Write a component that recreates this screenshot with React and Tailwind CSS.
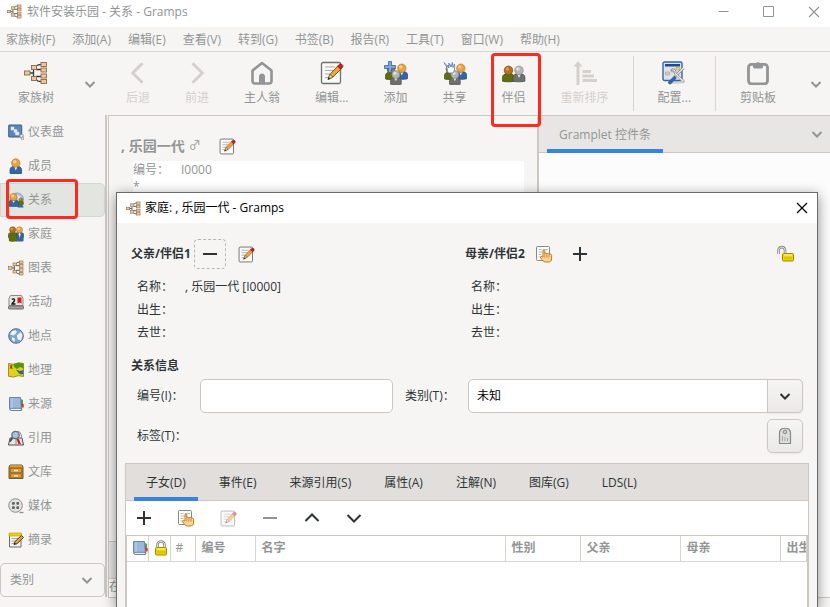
import React, { useState } from "react";

const Chevron = ({ dir = "down", size = 16, width = 2 }) => {
  const paths = {
    down: "M3.5 6l4.5 4.5L12.500 6",
    up: "M1.500 11L8 4.500l6.500 6.500",
    wide: "M1.500 5L8 11.500 14.500 5",
    left: "M11 1.500L4.500 8l6.500 6.500",
    right: "M5 1.500L11.500 8 5 14.500",
  };
  return (
    <svg width={size} height={size} viewBox="0 0 16 16" fill="none" stroke="currentColor" strokeWidth={width}>
      <path d={paths[dir]} />
    </svg>
  );
};

const PlusIcon = () => (
  <svg width="16" height="16" viewBox="0 0 16 16" fill="currentColor">
    <path d="M7 1h2v6h6v2H9v6H7V9H1V7h6z" />
  </svg>
);

const MinusIcon = () => (
  <svg width="16" height="16" viewBox="0 0 16 16" fill="currentColor">
    <path d="M1 7h14v2H1z" />
  </svg>
);

const CloseIcon = () => (
  <svg width="12" height="12" viewBox="0 0 12 12" stroke="currentColor" strokeWidth="1.200">
    <path d="M1 1l10 10M11 1L1 11" />
  </svg>
);

const TreeIcon = ({ size = 16 }) => (
  <svg width={size} height={size} viewBox="0 0 24 24">
    <g fill="none" stroke="#3a3a3a" strokeWidth="1.300">
      <path d="M5 12h4M9.500 9v6M11 7.500C13 3.500 14 3.500 18 3.500M12 8.500h6M12 15.500h6M11 16.500c2 4 3 4 7 4" />
    </g>
    <g fill="#ecc79c" stroke="#8c6b47" strokeWidth=".9">
      <rect x="0.500" y="10" width="5.500" height="4" />
      <rect x="7.500" y="4.500" width="5" height="4" />
      <rect x="7.500" y="15.500" width="5" height="4" />
      <rect x="17" y="1.500" width="5.500" height="4" />
      <rect x="17" y="7" width="5.500" height="4" />
      <rect x="17" y="13" width="5.500" height="4" />
      <rect x="17" y="18.500" width="5.500" height="4" />
    </g>
  </svg>
);

const tones = {
  blue: ["#e9a244", "#f9cf8c", "#3465a4", "#b3741d", "#204a87"],
  green: ["#b0701f", "#d99c4e", "#5b6f0c", "#7d4c10", "#3f4d06"],
  gray: ["#b4b6b2", "#e2e3e1", "#6e706c", "#888a85", "#4d4f4c"],
};

// Head and shoulders, drawn in a 12 by 15 box
const Bust = ({ x, y, s = 1, tone }) => {
  const [head, shine, body, headLine, bodyLine] = tones[tone];
  return (
    <g transform={`translate(${x} ${y}) scale(${s})`}>
      <path d="M.5 14.500V11C.5 8.500 2.500 7.500 6 7.500s5.500 1 5.500 3.500v3.500C9 15.300 3 15.300.5 14.500z" fill={body} stroke={bodyLine} strokeWidth=".7" />
      {tone !== "green" && <path d="M4.600 8.300L6 11.500l1.400-3.200z" fill="#eeeeec" />}
      <circle cx="6" cy="4.500" r="4" fill={head} stroke={headLine} strokeWidth=".6" />
      <circle cx="5" cy="3.300" r="1.600" fill={shine} />
    </g>
  );
};

const EditIcon = ({ size = 16 }) => (
  <svg width={size} height={size} viewBox="0 0 24 24">
    <rect x="1.500" y="1.500" width="19" height="21" rx="1.500" fill="#fafafa" stroke="#6f716d" strokeWidth="1.300" />
    <path d="M5 6h10M5 9.500h8M5 13h5M5 16.500h3" stroke="#a9aba7" strokeWidth="1.200" />
    <path d="M8 18.500l1.800-5L18 4.800l3.200 3L13 16z" fill="#f3a33b" stroke="#7c4a0b" strokeWidth=".9" />
    <path d="M8 18.500l1.800-5 3.200 2.500z" fill="#f2dcb8" stroke="#55452c" strokeWidth=".7" />
    <path d="M8 18.500l.8-2.200 1.400 1.200z" fill="#111" />
    <path d="M17.500 5.300l2-2c1.500-1.200 4.300 1 3.200 2.800l-2 2.200z" fill="#d51c1c" stroke="#8b0d0d" strokeWidth=".7" />
  </svg>
);

const HandIcon = () => (
  <svg width="18" height="18" viewBox="0 0 18 18">
    <rect x="1.500" y="1.500" width="13" height="14" rx="1" fill="#fbfbfb" stroke="#888a85" />
    <path d="M3.500 4.500h3M3.500 7h4M3.500 9.500h3M3.500 12h3M8 4.500h5" stroke="#babdb6" />
    <path d="M8 12V5.800c0-1.300 1.800-1.300 1.800 0V9l1-.8 1.200.8 1.300-.6 1 .9 1.300-.3 1 1.200V14c0 2-1.500 3-3.500 3h-2.600C8.500 17 7 15 5.700 12.800c-.6-1.200.8-1.800 1.500-1z" fill="#fbd29a" stroke="#c17d11" strokeWidth="1" />
    <path d="M9.800 9.500v3M11.900 9.500v3M14 9.800v2.700" stroke="#c17d11" strokeWidth=".8" />
  </svg>
);

const LockIcon = ({ open }) => {
  const shackle = open ? "M2.500 9V5.500C2.500 1 9 1 9 5.500V8" : "M5.500 9V5.500C5.500 1.500 12.500 1.500 12.500 5.500V9";
  return (
    <svg width="18" height="18" viewBox="0 0 18 18">
      <path d={shackle} fill="none" stroke="#888a85" strokeWidth="2.600" />
      <path d={shackle} fill="none" stroke="#e8e9e6" strokeWidth="1" />
      <rect x={open ? 6.5 : 3.5} y="8.500" width="11" height="7.500" rx="1" fill="#edd400" stroke="#a58a00" />
      <path d={open ? "M8 10h8" : "M5 10h8"} stroke="#fbf08a" strokeWidth="1.300" />
      <path d={open ? "M8 13h8" : "M5 13h8"} stroke="#d0b400" />
    </svg>
  );
};

const BookIcon = () => (
  <svg width="16" height="16" viewBox="0 0 16 16">
    <path d="M13 3l2 1v3L13 8z" fill="#3faa36" />
    <path d="M13 6.500l2.700 1.500v3.500L13 12z" fill="#e0272c" />
    <path d="M13 10.500l1.500.5v2.500l-1.500.5z" fill="#edd400" />
    <path d="M1.500 1.500h11l1 12.500H3c-1 0-1.500-.6-1.500-1.500z" fill="#9ab8db" stroke="#5c7aa5" strokeWidth=".9" />
    <path d="M2.500 12.300h10.800l.2 2.200H3.300c-1.300 0-1.300-2.200-.8-2.200z" fill="#eeeeec" stroke="#5b6f8c" strokeWidth=".8" />
    <path d="M4 2v10" stroke="#bdd2ea" />
  </svg>
);

const HomeIcon = () => (
  <svg width="24" height="24" viewBox="0 0 24 24">
    <path d="M2.500 9.500L12 2l9.500 7.500V20c0 1.500-1 2.500-2.500 2.500H5c-1.500 0-2.500-1-2.500-2.500z" fill="none" stroke="#929595" strokeWidth="2.600" strokeLinejoin="round" />
    <path d="M9 22v-6.500c0-4 6-4 6 0V22z" fill="#929595" />
  </svg>
);

const AddPeopleIcon = () => (
  <svg width="24" height="24" viewBox="0 0 24 24">
    <Bust x={1} y={3.500} s={1} tone="green" />
    <Bust x={11.500} y={2.500} s={1.050} tone="blue" />
    <Bust x={6} y={9} s={0.980} tone="gray" />
    <path d="M4.500.5h3v4h4v3h-4v4h-3v-4h-4v-3h4z" fill="#7aa7dc" stroke="#3465a4" strokeWidth=".8" />
  </svg>
);

const ShareIcon = () => (
  <svg width="24" height="24" viewBox="0 0 24 24">
    <Bust x={1} y={3.500} s={1} tone="green" />
    <Bust x={11.500} y={2.500} s={1.050} tone="blue" />
    <Bust x={6} y={9} s={0.980} tone="gray" />
    <path d="M1 1.500l3 5c0 2 .5 4 1.500 5.500h4.500c1.500-2 2-5.500 1.500-9L10 6.500 9.300 1.500 8 6 5.800 2l.2 5z" fill="#fff" stroke="#5b86c4" strokeWidth=".9" />
  </svg>
);

const PartnersIcon = () => (
  <svg width="24" height="24" viewBox="0 0 24 24">
    <Bust x={0} y={4.500} s={1.080} tone="green" />
    <Bust x={10.500} y={4.500} s={1.080} tone="gray" />
  </svg>
);

const SortIcon = () => (
  <svg width="24" height="24" viewBox="0 0 24 24" fill="#d5d0cc">
    <path d="M5 0l4.500 5.500h-3V24h-3V5.500h-3z" />
    <path d="M9.500 9H18v3H9.500zM9.500 13.500H21v3H9.500zM9.500 18H24v3H9.500z" />
  </svg>
);

const ConfigIcon = () => (
  <svg width="24" height="24" viewBox="0 0 24 24">
    <ellipse cx="14" cy="21.500" rx="9" ry="1.500" fill="#d3d7cf" />
    <rect x="1" y="1" width="19" height="18.500" rx="1.500" fill="#d9e3ef" stroke="#3465a4" strokeWidth="1.400" />
    <rect x="3" y="3" width="15" height="2.500" fill="#204a87" />
    <path d="M3.500 11h4v3h-4zM9 8h4v3H9zM14 6.500h3.500V9H14z" fill="#ecc79c" stroke="#b59a78" strokeWidth=".6" />
    <path d="M12.500 16l9-9" stroke="#888a85" strokeWidth="2.600" />
    <path d="M12.500 16l9-9" stroke="#e3e5e1" strokeWidth="1.500" />
    <path d="M8 21.500l4.500-4.500" stroke="#3465a4" strokeWidth="3.600" strokeLinecap="round" />
    <path d="M9 9.500l3 .5.500 3 8.500 8.500 1.500-1.500-8.500-8c.5-3-2-4.500-4-4z" fill="#eeeeec" stroke="#888a85" strokeWidth=".8" />
  </svg>
);

const ClipboardIcon = () => (
  <svg width="24" height="24" viewBox="0 0 24 24">
    <rect x="2.500" y="3.300" width="19" height="19.500" rx="3" fill="none" stroke="#929595" strokeWidth="2.800" />
    <path d="M7 3h2.500C10 .5 14 .5 14.500 3H17v3.500l-1.500 1h-7L7 6.500z" fill="#929595" />
  </svg>
);

const DashboardIcon = () => (
  <svg width="16" height="16" viewBox="0 0 16 16">
    <rect x=".7" y="1" width="13" height="12" rx=".5" fill="#5f86ba" stroke="#3b5f93" />
    <path d="M3 3h3v3H3zM6 5.500h3v3H6zM7.500 8h3.500v3H7.500z" fill="#e9eff7" stroke="#c8d6e8" strokeWidth=".5" />
    <circle cx="13.500" cy="12" r="1.800" fill="#dfe3e8" stroke="#888a85" strokeWidth=".8" />
    <circle cx="14.500" cy="14.500" r="1.300" fill="#dfe3e8" stroke="#888a85" strokeWidth=".7" />
  </svg>
);

const PersonIcon = () => (
  <svg width="16" height="16" viewBox="0 0 16 16">
    <Bust x={1.500} y={0.300} s={1.050} tone="blue" />
  </svg>
);

const RelationIcon = () => (
  <svg width="16" height="16" viewBox="0 0 16 16">
    <circle cx="9" cy="7.500" r="6.500" fill="#a9c4e4" stroke="#6d95c8" strokeWidth=".8" />
    <path d="M8 2l5 3-3 3z" fill="#dce8f5" />
    <Bust x={0.200} y={1} s={0.900} tone="blue" />
    <path d="M9.500 15.500c0-4 6-4 6 0z" fill="#3465a4" />
    <Bust x={10} y={5.500} s={0.480} tone="green" />
  </svg>
);

const FamilyIcon = () => (
  <svg width="16" height="16" viewBox="0 0 16 16">
    <Bust x={6.800} y={0.300} s={0.780} tone="blue" />
    <path d="M7.500 15.500l1-6h6.500l.7 4.500c0 1-1 1.500-2 1.500z" fill="#3465a4" />
    <path d="M10.500 8l1.200 4 1-4z" fill="#eeeeec" />
    <Bust x={0} y={0.300} s={0.780} tone="green" />
    <path d="M.5 9.500h8v5.500c-2 1-6.500.8-7.500 0z" fill="#5b6f0c" />
  </svg>
);

const EventIcon = () => (
  <svg width="16" height="16" viewBox="0 0 16 16">
    <path d="M2.500 1.500h11l1.500 3v7H1v-7z" fill="#e6e7e4" stroke="#888a85" />
    <rect x="0.500" y="12" width="15" height="3" rx="1" fill="#a4a6a1" stroke="#6a6c68" />
    <path d="M4 5.500c1-1.300 3-.6 2.500 1C6.200 7.800 4.500 8.500 4 10h3.500" fill="none" stroke="#111" strokeWidth="1.300" />
    <path d="M9.500 3.500h4v6l-2-1-2 1z" fill="#d51c1c" />
  </svg>
);

const PlaceIcon = () => (
  <svg width="16" height="16" viewBox="0 0 16 16">
    <circle cx="8" cy="8" r="7.300" fill="#7fa3cf" stroke="#4c71a3" />
    <path d="M4 3l3.500-.8L9 4 7 6.500 5 7.500 2 6zM9 7l4-3 1.500 3.500-1.500 5-3-.8-1-2.500zM4 9l3 1.500L6.500 14 4 12z" fill="#eef3f9" />
  </svg>
);

const GeoIcon = () => (
  <svg width="16" height="16" viewBox="0 0 16 16">
    <path d="M.5 1.500l5 .8 5-1.500 5 .7v13l-5-.8-5 1.300-5-.7z" fill="#e6cf1a" stroke="#8c7b0d" strokeWidth=".8" />
    <path d="M5.500 2l5-1.200 4.700.7v5L12 5 9 7 6 5z" fill="#4e9a06" />
    <path d="M8 7.500l4 1.500 3.200-1v4l-3 .5-2-2z" fill="#3465a4" />
    <path d="M2 3.500l2.500 3M4.500 3.500l-2.500 3M3.200 2.800v4" stroke="#7c3a10" strokeWidth=".9" />
  </svg>
);

const CitationIcon = () => (
  <svg width="16" height="16" viewBox="0 0 16 16">
    <path d="M2 8h12l1.500 7H.5z" fill="#e8e9e6" stroke="#4d4f4c" />
    <path d="M8 8v7" stroke="#888a85" />
    <path d="M8.500 9h2.500l2 5.500-1.500-.8-1 .8z" fill="#d51c1c" />
    <path d="M5 7L2 11.500" stroke="#4d4f4c" strokeWidth="2" />
    <circle cx="7.500" cy="5" r="3.700" fill="#a8c3e2" stroke="#64707e" strokeWidth="1.300" />
    <path d="M10 1c3 1 3.500 5 4 8" fill="none" stroke="#888a85" />
  </svg>
);

const RepositoryIcon = () => (
  <svg width="16" height="16" viewBox="0 0 16 16">
    <path d="M2 1h12l1 2v11.500H1V3z" fill="#c17d11" stroke="#6e5a3a" />
    <path d="M2 2h12" stroke="#edbd6c" />
    <rect x="2.500" y="4.500" width="11" height="4" fill="#dc9d3c" stroke="#9a661c" strokeWidth=".7" />
    <rect x="2.500" y="9.800" width="11" height="4" fill="#dc9d3c" stroke="#9a661c" strokeWidth=".7" />
    <path d="M6 6.500h4M6 11.800h4" stroke="#f5ead4" strokeWidth="1.400" />
  </svg>
);

const MediaIcon = () => (
  <svg width="16" height="16" viewBox="0 0 16 16">
    <circle cx="7.500" cy="7.500" r="6.800" fill="#e0e3dd" stroke="#8d908b" />
    <path d="M11.500 14.500h4" stroke="#8d908b" strokeWidth="1.300" />
    <g fill="#5d625e">
      <rect x="4" y="4" width="2.800" height="2.800" rx="1" />
      <rect x="8.300" y="4" width="2.800" height="2.800" rx="1" />
      <rect x="4" y="8.300" width="2.800" height="2.800" rx="1" />
      <rect x="8.300" y="8.300" width="2.800" height="2.800" rx="1" />
    </g>
  </svg>
);

const NoteIcon = () => (
  <svg width="16" height="16" viewBox="0 0 16 16">
    <path d="M1.500 2h11.500v13H1.500z" fill="#f4f4f2" stroke="#6a6c68" />
    <path d="M1 1h12.500v3H1z" fill="#edd400" stroke="#b59c00" strokeWidth=".6" />
    <path d="M3.500 6.500h7M3.500 9h4M3.500 11.500h3" stroke="#a9aba7" />
    <path d="M6 12.500l1-3 6.500-6 2 2L9 11.800z" fill="#e9a13b" stroke="#3a2a10" strokeWidth=".9" />
    <path d="M6 12.500l.5-1.700 1.300 1z" fill="#111" />
  </svg>
);

const TagIcon = () => (
  <svg width="16" height="18" viewBox="0 0 16 18">
    <path d="M2.500 16.500v-11c0-2 2-4 3.500-4h4c1.500 0 3.500 2 3.500 4v11z" fill="#dcded9" stroke="#888a85" strokeWidth="1.200" />
    <circle cx="8" cy="5" r="1.800" fill="#c9cbc7" stroke="#888a85" />
    <path d="M5.500 9v5M8 10v4M10.500 11v3" stroke="#a4a6a1" />
  </svg>
);

const menus = ["家族树(F)", "添加(A)", "编辑(E)", "查看(V)", "转到(G)", "书签(B)", "报告(R)", "工具(T)", "窗口(W)", "帮助(H)"];

const views = [
  ["仪表盘", DashboardIcon],
  ["成员", PersonIcon],
  ["关系", RelationIcon],
  ["家庭", FamilyIcon],
  ["图表", TreeIcon],
  ["活动", EventIcon],
  ["地点", PlaceIcon],
  ["地理", GeoIcon],
  ["来源", BookIcon],
  ["引用", CitationIcon],
  ["文库", RepositoryIcon],
  ["媒体", MediaIcon],
  ["摘录", NoteIcon],
];

const tabs = ["子女(D)", "事件(E)", "来源引用(S)", "属性(A)", "注解(N)", "图库(G)", "LDS(L)"];

const ToolButton = ({ label, icon, disabled, marked }) => (
  <button
    disabled={disabled}
    className={`relative flex flex-col items-center px-[17px] pt-[9px] shrink-0 ${disabled ? "text-[#d5d0cc]" : ""}`}
  >
    <span className="flex items-center justify-center h-6 mb-[5px]">{icon}</span>
    <span className="leading-4">{label}</span>
    {marked && (
      <span className="absolute z-10 left-[6px] top-px w-[50px] h-[74px] border-3 border-[#ff2a1f] rounded-sm" />
    )}
  </button>
);

const Separator = () => <div className="w-px h-[55px] mt-1 mx-[6px] bg-[#d8d4d0] shrink-0" />;

const Partner = ({ title, actions, name }) => (
  <div>
    <div className="flex items-center h-[30px]">
      <h2 className="font-bold whitespace-nowrap">{title}</h2>
      {actions}
    </div>
    <dl className="grid grid-cols-[48px_1fr] auto-rows-[23px] items-center mt-[6px] pl-[6px]">
      <dt>名称：</dt>
      <dd>{name}</dd>
      <dt>出生：</dt>
      <dd />
      <dt>去世：</dt>
      <dd />
    </dl>
  </div>
);

const FamilyDialog = () => {
  const [tab, setTab] = useState(tabs[0]);
  const [familyId, setFamilyId] = useState("");
  const [relType, setRelType] = useState("未知");

  return (
    <div
      role="dialog"
      className="absolute z-20 left-[116px] right-3 top-[192px] bottom-0 flex flex-col bg-[#f6f5f4] text-[#2e3436] border border-b-0 border-[#6b6b6b] shadow-[0_3px_12px_rgba(0,0,0,0.45)]"
    >
      {/* Title */}
      <div className="flex items-center h-[30px] pl-[9px] pr-[9px] bg-white text-black shrink-0">
        <TreeIcon size={15} />
        <h1 className="ml-1 flex-1">家庭: , 乐园一代 - Gramps</h1>
        <button aria-label="关闭">
          <CloseIcon />
        </button>
      </div>

      <div className="px-[14px] pt-4">
        {/* Partners */}
        <div className="grid grid-cols-[334px_1fr]">
          <Partner
            title="父亲/伴侣1"
            name=", 乐园一代 [I0000]"
            actions={
              <>
                <button aria-label="移除" className="flex items-center justify-center w-8 h-[30px] ml-[3px] border border-dashed border-[#b9b6b3] rounded-sm">
                  <MinusIcon />
                </button>
                <button aria-label="编辑" className="ml-3">
                  <EditIcon size={17} />
                </button>
              </>
            }
          />
          <Partner
            title="母亲/伴侣2"
            actions={
              <>
                <button aria-label="选择" className="ml-[10px]">
                  <HandIcon />
                </button>
                <button aria-label="添加" className="ml-[19px]">
                  <PlusIcon />
                </button>
                <button aria-label="隐私" className="ml-auto mr-[9px]">
                  <LockIcon open />
                </button>
              </>
            }
          />
        </div>

        {/* Relationship */}
        <h2 className="font-bold leading-5 mt-3">关系信息</h2>
        <div className="grid grid-cols-[63px_193fr_75px_335fr] items-center gap-y-[6px] mt-[3px] pl-[6px]">
          <label htmlFor="family-id">编号(I)：</label>
          <input
            id="family-id"
            value={familyId}
            onChange={(e) => setFamilyId(e.target.value)}
            className="w-full h-[34px] px-2 bg-white border border-[#cdc7c2] rounded-[5px] focus:outline-none"
          />
          <label htmlFor="rel-type" className="pl-3">类别(T)：</label>
          <div className="relative">
            <select
              id="rel-type"
              value={relType}
              onChange={(e) => setRelType(e.target.value)}
              className="appearance-none block w-full h-[34px] pl-2 bg-white text-black border border-[#cdc7c2] rounded-[5px] focus:outline-none"
            >
              <option>未知</option>
            </select>
            <span className="absolute right-0 top-0 flex items-center justify-center w-9 h-[34px] border border-[#cdc7c2] rounded-r-[5px] bg-linear-to-b from-[#f6f5f4] to-[#ebe9e7] shadow-xs pointer-events-none">
              <Chevron />
            </span>
          </div>
          <span className="col-span-3">标签(T)：</span>
          <button
            aria-label="标签"
            className="flex items-center justify-center justify-self-end w-9 h-[34px] border border-[#cdc7c2] rounded-[5px] bg-linear-to-b from-[#f6f5f4] to-[#ebe9e7] shadow-xs"
          >
            <TagIcon />
          </button>
        </div>
      </div>

      {/* Notebook */}
      <div className="flex flex-col flex-1 mt-[10px] mx-2 border border-b-0 border-[#cdc7c2] bg-white overflow-hidden">
        <div role="tablist" className="flex gap-[9px] h-[37px] px-2 bg-[#e1dedb] border-b border-[#cdc7c2] shrink-0">
          {tabs.map((item) => (
            <button
              key={item}
              role="tab"
              aria-selected={tab === item}
              onClick={() => setTab(item)}
              className={`px-3 h-[37px] border-y-4 border-t-transparent whitespace-nowrap ${
                tab === item ? "border-b-[#3584e4]" : "border-b-transparent"
              }`}
            >
              {item}
            </button>
          ))}
        </div>

        <div className="flex items-center h-[34px] shrink-0 pl-[9px]">
          <div className="flex gap-[24px] [&>button]:flex [&>button]:items-center [&>button]:justify-center [&>button]:w-[18px] [&>button]:h-[18px]">
            <button aria-label="添加"><PlusIcon /></button>
            <button aria-label="选择"><HandIcon /></button>
            <button aria-label="编辑" className="opacity-50"><EditIcon size={17} /></button>
            <button aria-label="移除" className="text-[#929595]"><MinusIcon /></button>
            <button aria-label="上移"><Chevron dir="up" /></button>
            <button aria-label="下移"><Chevron dir="wide" /></button>
          </div>
        </div>

        <div className="flex-1 border-t border-x border-[#cdc7c2] overflow-hidden">
          <table className="table-fixed w-full border-collapse text-left text-[#929595]">
            <thead>
              <tr className="h-[25px] border-b border-[#d8d4d0] [&>th]:border-r [&>th]:border-[#d8d4d0] [&>th]:whitespace-nowrap [&>th]:overflow-hidden">
                <th className="w-[21px]">
                  <span className="flex justify-end"><BookIcon /></span>
                </th>
                <th className="w-[22px]">
                  <span className="flex justify-end"><LockIcon /></span>
                </th>
                <th className="w-[25px] pl-[5px] font-normal">#</th>
                <th className="w-[60px] pl-[6px]">编号</th>
                <th className="w-[250px] pl-[6px]">名字</th>
                <th className="w-[75px] pl-[6px]">性别</th>
                <th className="w-[100px] pl-[6px]">父亲</th>
                <th className="w-[100px] pl-[6px]">母亲</th>
                <th className="pl-[6px]">出生</th>
              </tr>
            </thead>
          </table>
        </div>
      </div>
    </div>
  );
};

const App = () => {
  const [view, setView] = useState("关系");

  return (
    <div className="relative flex flex-col h-screen overflow-hidden bg-[#f6f5f4] text-[#929595] text-[12px] leading-4 font-['Open_Sans','Noto_Sans_CJK_SC',sans-serif]">

      {/* Window title */}
      <div className="flex items-center h-[27px] pl-[7px] pr-[10px] pb-1 bg-white shrink-0">
        <TreeIcon size={15} />
        <h1 className="ml-[5px] flex-1">软件安装乐园 - 关系 - Gramps</h1>
        <div className="flex items-center gap-[34px]">
          <button aria-label="最小化">
            <svg width="11" height="11" viewBox="0 0 11 11" stroke="currentColor"><path d="M.5 5.500h10" /></svg>
          </button>
          <button aria-label="最大化">
            <svg width="11" height="11" viewBox="0 0 11 11" stroke="currentColor" fill="none"><path d="M.5.5h10v10H.5z" /></svg>
          </button>
          <button aria-label="关闭">
            <CloseIcon />
          </button>
        </div>
      </div>

      {/* Menu */}
      <nav className="flex items-center gap-[17px] h-[25px] px-[6px] pt-[2px] border-b border-[#d8d4d0] shrink-0">
        {menus.map((menu) => (
          <button key={menu} className="whitespace-nowrap">{menu}</button>
        ))}
      </nav>

      {/* Toolbar */}
      <div className="flex gap-px h-[63px] pl-px shrink-0">
        <ToolButton label="家族树" icon={<TreeIcon size={24} />} />
        <button aria-label="打开最近" className="flex items-center justify-center w-9">
          <Chevron />
        </button>
        <ToolButton label="后退" icon={<Chevron dir="left" size={24} />} disabled />
        <ToolButton label="前进" icon={<Chevron dir="right" size={24} />} disabled />
        <ToolButton label="主人翁" icon={<HomeIcon />} />
        <ToolButton label="编辑..." icon={<EditIcon size={24} />} />
        <ToolButton label="添加" icon={<AddPeopleIcon />} />
        <ToolButton label="共享" icon={<ShareIcon />} />
        <ToolButton label="伴侣" icon={<PartnersIcon />} marked />
        <ToolButton label="重新排序" icon={<SortIcon />} disabled />
        <Separator />
        <ToolButton label="配置..." icon={<ConfigIcon />} />
        <Separator />
        <ToolButton label="剪贴板" icon={<ClipboardIcon />} />
        <button aria-label="更多" className="flex items-center ml-auto mr-[6px]">
          <Chevron />
        </button>
      </div>

      <div className="flex flex-1 min-h-0">
        {/* Navigator */}
        <aside className="flex flex-col w-[105px] shrink-0">
          {views.map(([label, Icon]) => (
            <button
              key={label}
              onClick={() => setView(label)}
              className={`relative flex items-center gap-1 h-[34px] pl-[7px] border rounded-r-[5px] ${
                view === label ? "bg-[#e3e5e0] border-[#d8d4d0]" : "border-transparent"
              }`}
            >
              <Icon />
              {label}
              {label === "关系" && (
                <span className="absolute z-10 left-[5px] -top-[5px] w-[72px] h-[40px] border-3 border-[#ff2a1f] rounded-sm" />
              )}
            </button>
          ))}
          <div className="relative mt-auto">
            <select
              aria-label="类别"
              className="appearance-none block w-full h-[34px] pl-[9px] border border-[#cdc7c2] rounded-[5px] focus:outline-none"
            >
              <option>类别</option>
            </select>
            <span className="absolute right-[10px] top-[9px] pointer-events-none">
              <Chevron />
            </span>
          </div>
        </aside>
        <div className="w-[3px] border-l-2 border-[#cdc7c2] shrink-0" />

        {/* Active person */}
        <main className="flex flex-col flex-1 border-l border-t border-[#cdc7c2] min-w-0">
          <div className="flex items-center h-5 mt-5 pl-3">
            <h2 className="text-[14px] font-bold">, 乐园一代</h2>
            <span className="ml-1">♂</span>
            <button aria-label="编辑" className="ml-[18px]">
              <EditIcon size={17} />
            </button>
          </div>
          <div className="flex-1 mt-[5px] ml-6 mr-[13px]">
            <div className="h-20 bg-white">
              <div className="grid grid-cols-[48px_1fr] h-[18px] items-center">
                <span>编号：</span>
                <span>I0000</span>
              </div>
              <span>*</span>
            </div>
          </div>
          <div className="h-[38px] bg-[#e8e6e4] border-y border-[#cdc7c2]" />
          <div className="h-[18px] bg-white overflow-hidden">在</div>
        </main>
        <div className="w-[2px] bg-[#cdc7c2] shrink-0" />

        {/* Gramplets */}
        <section className="w-[291px] border-t border-[#cdc7c2] bg-[#fcfcfc] shrink-0">
          <div className="flex items-center justify-between h-[37px] pl-2 pr-[5px] bg-[#e8e6e4] border-b border-[#cdc7c2]">
            <button className="self-start h-[37px] px-3 border-y-4 border-t-transparent border-b-[#3584e4]">
              Gramplet 控件条
            </button>
            <button aria-label="Gramplet 菜单">
              <Chevron />
            </button>
          </div>
        </section>
      </div>

      {/* Status bar */}
      <div className="h-[10px] ml-[108px] border-t border-[#cdc7c2] shrink-0" />

      <FamilyDialog />
    </div>
  );
};

export default App;
